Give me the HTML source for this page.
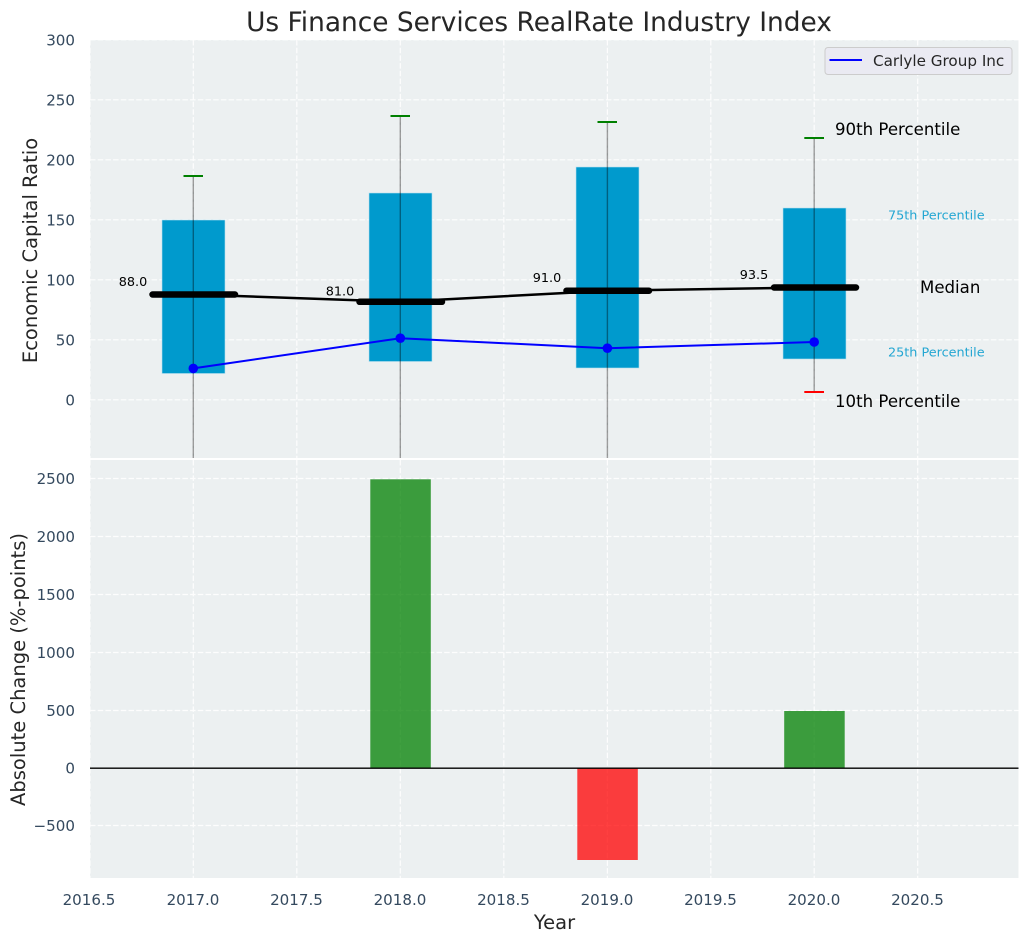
<!DOCTYPE html>
<html><head><meta charset="utf-8"><style>
html,body{margin:0;padding:0;background:#fff;width:1029px;height:942px;overflow:hidden}
svg{display:block}
text{font-family:"DejaVu Sans",sans-serif}
.t{font-size:15.1px;fill:#34495e}
.g{stroke:#fff;stroke-width:1.2;stroke-dasharray:5.5 2.2;opacity:.9;fill:none}
.l{font-size:19.5px;fill:#262626}
.b{font-size:16.6px;fill:#000}
.s{font-size:12.8px;fill:#000}
.c{font-size:12.8px;fill:#009ACD;opacity:.85}
</style></head><body>
<svg width="1029" height="942" viewBox="0 0 1029 942" xmlns="http://www.w3.org/2000/svg">
<rect x="90" y="40" width="928.500" height="418" fill="#ecf0f1"/>
<rect x="90" y="460" width="928.500" height="418" fill="#ecf0f1"/>
<!-- grid top -->
<g class="g">
<path d="M90 39.800H1018.500M90 99.800H1018.500M90 159.800H1018.500M90 219.800H1018.500M90 279.800H1018.500M90 339.800H1018.500M90 399.800H1018.500"/>
<path d="M90 40V458M193.300 40V458M296.800 40V458M400.300 40V458M503.800 40V458M607.400 40V458M710.800 40V458M814.200 40V458M917.700 40V458"/>
</g>
<!-- grid bottom -->
<g class="g">
<path d="M90 478.500H1018.500M90 536.500H1018.500M90 594.500H1018.500M90 652.500H1018.500M90 710.500H1018.500M90 825.500H1018.500"/>
<path d="M90 460V878M193.300 460V878M296.800 460V878M400.300 460V878M503.800 460V878M607.400 460V878M710.800 460V878M814.200 460V878M917.700 460V878"/>
</g>
<!-- boxes -->
<g fill="#009ACD" stroke="#b5e0ee" stroke-width=".6">
<rect x="162" y="220" width="63" height="153.500"/>
<rect x="369" y="193" width="63" height="168.500"/>
<rect x="576" y="167" width="63" height="201"/>
<rect x="783" y="208" width="63" height="151"/>
</g>
<!-- whiskers -->
<g stroke="#000" stroke-opacity=".38" stroke-width="1.400" fill="none">
<path d="M193.300 176V458M400.300 116V458M607.400 122V458M814.200 138V392"/>
</g>
<g stroke="#008000" stroke-width="2" fill="none">
<path d="M183.500 176H203M390.500 116H410M597.500 122H617M804.300 138H824"/>
</g>
<path d="M804.300 392H824" stroke="#ff0000" stroke-width="2"/>
<!-- median line -->
<path d="M193.300 294.500L400.300 301.800L607.400 290.700L814.200 287.500" stroke="#000" stroke-width="2.500" fill="none"/>
<g stroke="#000" stroke-width="6.500" stroke-linecap="round">
<path d="M152.500 294.500H235M359.500 301.800H442M566.500 290.700H649M774 287.500H856"/>
</g>
<!-- blue -->
<path d="M193.300 368.400L400.300 338.200L607.400 348.200L814.200 342" stroke="#0000ff" stroke-width="2" fill="none"/>
<g fill="#0000ff">
<circle cx="193.300" cy="368.400" r="4.800"/><circle cx="400.300" cy="338.200" r="4.800"/><circle cx="607.400" cy="348.200" r="4.800"/><circle cx="814.200" cy="342" r="4.800"/>
</g>
<!-- bars bottom -->
<g>
<rect x="370.300" y="479.300" width="60.500" height="288.700" fill="#008000" fill-opacity=".75"/>
<rect x="577.300" y="768" width="60.500" height="92" fill="#ff0000" fill-opacity=".75"/>
<rect x="784.200" y="711" width="60.500" height="57" fill="#008000" fill-opacity=".75"/>
</g>
<path d="M90 768.200H1018.500" stroke="#000" stroke-width="1.300"/>
<!-- labels in plot -->
<text class="s" x="133" y="286" text-anchor="middle">88.0</text>
<text class="s" x="340" y="295.500" text-anchor="middle">81.0</text>
<text class="s" x="547" y="282" text-anchor="middle">91.0</text>
<text class="s" x="754" y="279" text-anchor="middle">93.5</text>
<text class="b" x="835" y="135">90th Percentile</text>
<text class="b" x="835" y="407">10th Percentile</text>
<text class="b" x="920" y="293">Median</text>
<text class="c" x="888" y="219.500">75th Percentile</text>
<text class="c" x="888" y="356.500">25th Percentile</text>
<!-- legend -->
<rect x="825" y="47.500" width="187" height="27" rx="3" fill="#eaeaf2" stroke="#cccccc" stroke-width="1"/>
<path d="M829.500 60H862" stroke="#0000ff" stroke-width="2"/>
<text x="873" y="66" font-size="15.200" fill="#262626">Carlyle Group Inc</text>
<!-- title -->
<text x="539" y="31" text-anchor="middle" font-size="26.400" fill="#262626">Us Finance Services RealRate Industry Index</text>
<!-- y ticks top -->
<g class="t" text-anchor="end">
<text x="75" y="45.500">300</text><text x="75" y="105.500">250</text><text x="75" y="165.500">200</text><text x="75" y="225.500">150</text><text x="75" y="285.500">100</text><text x="75" y="345.500">50</text><text x="75" y="405.500">0</text>
<text x="75" y="484">2500</text><text x="75" y="542">2000</text><text x="75" y="600">1500</text><text x="75" y="658">1000</text><text x="75" y="716">500</text><text x="75" y="773.500">0</text><text x="75" y="831">−500</text>
</g>
<g class="t" text-anchor="middle">
<text x="89" y="905">2016.5</text><text x="193" y="905">2017.0</text><text x="296.500" y="905">2017.5</text><text x="400" y="905">2018.0</text><text x="503.500" y="905">2018.5</text><text x="607" y="905">2019.0</text><text x="710.500" y="905">2019.5</text><text x="814" y="905">2020.0</text><text x="917.500" y="905">2020.5</text>
</g>
<text class="l" x="554.500" y="929" text-anchor="middle">Year</text>
<text class="l" transform="translate(37 250.500) rotate(-90)" text-anchor="middle">Economic Capital Ratio</text>
<text class="l" transform="translate(25 669.500) rotate(-90)" text-anchor="middle">Absolute Change (%-points)</text>
</svg>
</body></html>
